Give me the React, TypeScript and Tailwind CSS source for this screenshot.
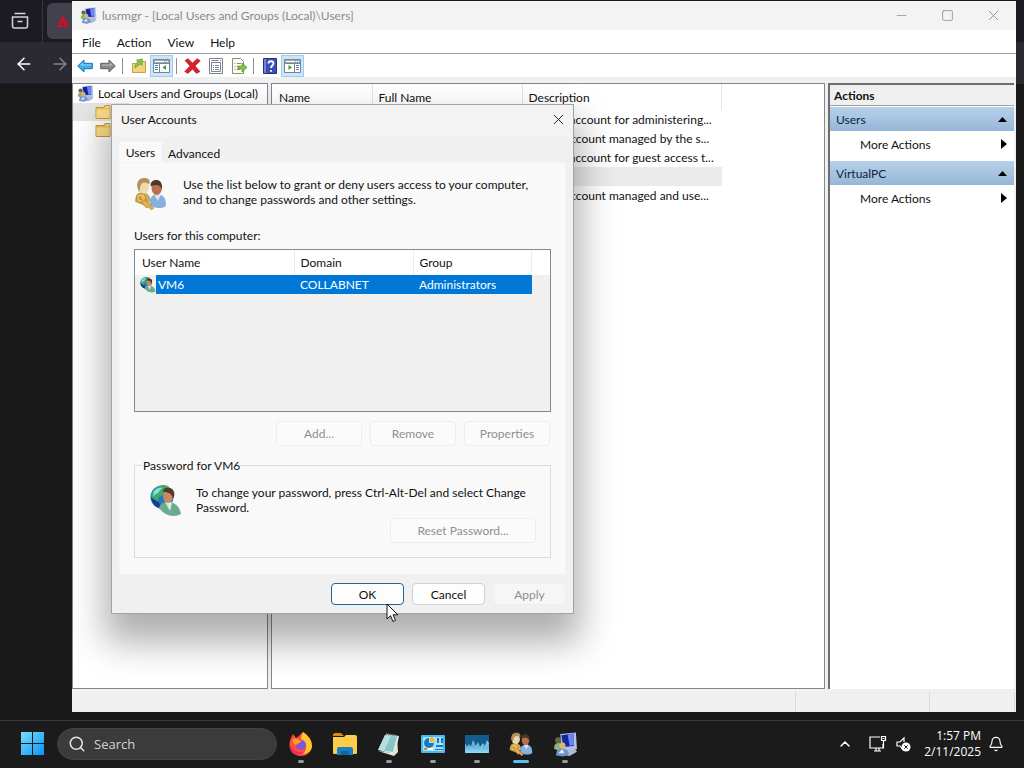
import { useState, type ReactNode } from "react";
import clsx from "clsx";
import { ArrowLeft, ArrowRight, Bell, ChevronUp, Minus, Search, Square, X } from "lucide-react";

const MmcIcon = ({ size }: { size: number }) => (
  <svg width={size} height={size} viewBox="0 0 24 24" className="shrink-0">
    <path d="M7 2l15-1.500 1 16-10 2-5-3z" fill="#b5c1e6" />
    <path d="M8 3l12-1.500v12l-10 1z" fill="#1423a0" />
    <path d="M14 2.500l6-1v11l-4 1z" fill="#6d86ee" />
    <path d="M11 18l10-2 2 3-7 4-6-1z" fill="#a9bdd6" />
    <circle cx="5" cy="8" r="3" fill="#5e6a44" />
    <path d="M1 16c0-4 2-5.500 4-5.500S9.500 12 9.500 16L7 19z" fill="#8fae7a" />
    <circle cx="9" cy="13" r="3" fill="#d8b66a" />
    <path d="M3 22.500c0-5 2-6.500 6-6.500s6 2 6 5.500l-5 2z" fill="#6d94cf" />
    <path d="M5 20.500l4-4 2 4z" fill="#e6eef8" />
  </svg>
);

const UsersKeyIcon = ({ size }: { size: number }) => (
  <svg width={size} height={size} viewBox="0 0 32 32" className="shrink-0">
    <path d="M15 27c0-7 2-10 8-10s8 4 8 11c-4 3-11 3-16-1z" fill="#86b1dd" />
    <path d="M20 18l3 5 3-5-2-2z" fill="#d4e7f8" />
    <ellipse cx="22" cy="11" rx="5" ry="6.500" fill="#b9704c" />
    <path d="M16 9c0-5 3-6 6-6s6 3 5 9c-2-5-5-5-11-3z" fill="#4b382b" />
    <path d="M1 24c0-6 2-9 7-9s8 3 8 8l-5 5z" fill="#c3ad66" />
    <ellipse cx="9" cy="9.500" rx="5.500" ry="7" fill="#ecd9b0" />
    <path d="M3 9c0-6 3-8 7-8s6 2 5 6c-5-3-8-2-9 3l-1 5z" fill="#b39355" />
    <path d="M7 16a4.500 4.500 0 1 1-1 8.900A4.500 4.500 0 0 1 7 16zm-1 3a1.600 1.600 0 1 0 2 2z" fill="#f0c060" stroke="#a8701a" strokeWidth=".7" />
    <path d="M10 22l9 8-2 2-3-3-2 1-5-6z" fill="#e7b14a" stroke="#a8701a" strokeWidth=".6" />
  </svg>
);

const GlobeUserIcon = ({ size }: { size: number }) => (
  <svg width={size} height={size} viewBox="0 0 32 32" className="shrink-0">
    <circle cx="12" cy="12" r="11.500" fill="#2379c4" />
    <path d="M3 6C8-1 17-2 21 4l-5 1-3 5-4 2-2 6-5-3C1 11 1 9 3 6z" fill="#45a86a" />
    <path d="M.8 12c1 7 6 11.500 12 11.500l-4-6z" fill="#173e8e" />
    <path d="M4 6c3-3 6-4 8-3L8 8l-5 3z" fill="#7de4e5" />
    <path d="M9 23c1-4 4-6 9-6 7 0 12 5 13 12-7 4-16 2-22-6z" fill="#6bab8c" />
    <path d="M15 17l5 9 2-8-3-2z" fill="#d2eddc" />
    <ellipse cx="18" cy="11" rx="5" ry="7" fill="#c98a62" />
    <path d="M13 7c0-4 3-5 6-4 5 0 7 6 4 11-1-6-5-7-10-7z" fill="#57372c" />
  </svg>
);

const ArrowIcon = ({ color, stroke, flip }: { color: string; stroke: string; flip?: boolean }) => (
  <svg width="16" height="16" viewBox="0 0 16 16" className={clsx(flip && "-scale-x-100")}>
    <path d="M.7 8L7 2v3.300h8.300v5.400H7V14z" fill={color} stroke={stroke} />
    <path d="M3 7.500L6.200 4.500v2H14v1z" fill="#fff" opacity=".4" />
  </svg>
);

const PaneIcon = ({ right }: { right?: boolean }) => (
  <svg width="17" height="15" viewBox="0 0 17 15">
    <path d="M.5 1.500h16v13H.5z" fill="#fff" stroke="#78848e" />
    <path d="M1 2h15v3H1z" fill="#9fabb6" />
    <path d="M2 3.500h9M12 3.500h1M14 3.500h1" stroke="#fff" />
    <path d="M1 5.500h15" stroke="#78848e" />
    <path d={right ? "M10.500 5v9" : "M6.500 5v9"} stroke="#78848e" />
    <path d={right ? "M12 7.500h3M12 9.500h3M12 11.500h3" : "M2 7.500h3M2 9.500h3M2 11.500h3"} stroke="#5780b4" />
    <path d={right ? "M4.500 7v5L8 9.500z" : "M13 7v5L9.500 9.500z"} fill="#35a32f" />
  </svg>
);

const FolderIcon = () => (
  <svg width="16" height="16" viewBox="0 0 16 16">
    <path d="M1 3.500h8l1-2h5v13H1z" fill="#efc458" stroke="#c99b35" />
    <path d="M1.500 5.500h13v8.500h-13z" fill="#fbdf88" />
    <path d="M10.500 3h4" stroke="#fff3c3" />
  </svg>
);

const tools: { label: string; icon: ReactNode; active?: boolean; sep?: boolean }[] = [
  { label: "Back", icon: <ArrowIcon color="#3eb0e8" stroke="#1972ae" /> },
  { label: "Forward", icon: <ArrowIcon color="#8b8b8b" stroke="#5c5c5c" flip />, sep: true },
  {
    label: "Up",
    icon: (
      <svg width="16" height="16" viewBox="0 0 16 16">
        <path d="M1.500 5.500h4l1.500-2h7.500v11h-13z" fill="#f1d47a" stroke="#c7a13b" />
        <path d="M4 10c0-3 1-5 3-6L5.500 2l6-1L11 7.500 9.500 6C7 7 6 9 4 10z" fill="#7fc44e" stroke="#4f9a35" strokeWidth=".6" />
      </svg>
    ),
  },
  { label: "Show/Hide Console Tree", icon: <PaneIcon />, active: true, sep: true },
  {
    label: "Delete",
    icon: (
      <svg width="17" height="16" viewBox="0 0 17 16">
        <path d="M1 2.500L4 .7 8.500 5 13 .7l3.300 2L11 8l5 5.500-3.500 2-4-4.500-4.500 4.500-3.300-2L6 8z" fill="#da2328" stroke="#a8161d" strokeWidth=".6" />
      </svg>
    ),
  },
  {
    label: "Properties",
    icon: (
      <svg width="16" height="16" viewBox="0 0 16 16" fill="none" stroke="#7c858e">
        <path d="M1.500.5h13v15h-13z" fill="#fff" />
        <path d="M3.500 2.500h7M12 2.500h1M3.500 4.500h9v9h-9zM5 7.500h1M7 7.500h4M5 9.500h1M7 9.500h4M5 11.500h1M7 11.500h4" />
      </svg>
    ),
  },
  {
    label: "Export List",
    icon: (
      <svg width="16" height="16" viewBox="0 0 16 16">
        <path d="M1.500.5h8l3 3v12h-11z" fill="#fffceb" stroke="#8d8b79" />
        <path d="M3.500 5.500h1M6 5.500h4M3.500 8.500h1M6 8.500h3M3.500 11.500h1M6 11.500h3" stroke="#7689a6" />
        <path d="M7 8h4V5l5 4.500-5 4.500v-3H7z" fill="#7fc53b" stroke="#4f922b" strokeWidth=".7" />
      </svg>
    ),
    sep: true,
  },
  {
    label: "Help",
    icon: (
      <svg width="14" height="16" viewBox="0 0 14 16">
        <path d="M.5.5h13v15H.5z" fill="#3b50b5" stroke="#24327f" />
        <path d="M1 1h2v14H1z" fill="#7586d6" />
        <path d="M5.500 5.500c0-3 5-3 5 0 0 2-2.500 2-2.500 4.500M8 12v1.800" fill="none" stroke="#fff" strokeWidth="1.800" />
      </svg>
    ),
  },
  { label: "Show/Hide Action Pane", icon: <PaneIcon right />, active: true },
];

const descriptions = [
  "Built-in account for administering...",
  "A user account managed by the s...",
  "Built-in account for guest access t...",
  "",
  "A user account managed and use...",
];

const BrowserStrip = () => (
  <div className="w-[72px] shrink-0 overflow-hidden bg-[#191919] text-white">
    <div className="flex h-[42px] items-center bg-[#1c1b22]">
      <button aria-label="Recent browsing" className="flex w-10 shrink-0 justify-center">
        <svg width="18" height="18" viewBox="0 0 18 18" fill="none" stroke="#d5d5da" strokeWidth="1.500">
          <path d="M3.500 1.500h11M1.500 5h15v9a2 2 0 0 1-2 2h-11a2 2 0 0 1-2-2zM6.500 9.500h5" />
        </svg>
      </button>
      <div className="ml-[2px] h-full w-px shrink-0 bg-[#38373f]" />
      <div className="ml-1 flex h-9 w-10 shrink-0 items-center rounded-md bg-[#42414d] pl-2">
        <svg width="16" height="16" viewBox="0 0 16 16">
          <path d="M8 2l7 12H1z" fill="#b8172c" />
          <path d="M8 9l2 3H6z" fill="#6b2838" />
        </svg>
      </div>
    </div>
    <div className="flex h-[42px] items-center gap-4 border-b border-[#202026] bg-[#2b2a33] pt-[2px] pl-[14px]">
      <button aria-label="Go back" className="shrink-0">
        <ArrowLeft size={20} strokeWidth={1.8} />
      </button>
      <button aria-label="Go forward" className="shrink-0 text-[#85848b]">
        <ArrowRight size={20} strokeWidth={1.8} />
      </button>
    </div>
  </div>
);

const ActionGroup = ({ title }: { title: string }) => (
  <div className="mb-1">
    <button className="flex h-6 w-full items-center justify-between bg-linear-to-b from-[#b7d0e9] to-[#96b7d8] pr-[7px] pl-[6px] text-[#0c2340]">
      {title}
      <svg width="9" height="5" viewBox="0 0 9 5">
        <path d="M4.500 0L9 5H0z" fill="#000" />
      </svg>
    </button>
    <button className="flex h-[26px] w-full items-center justify-between pr-[7px] pl-[30px]">
      More Actions
      <svg width="6" height="10" viewBox="0 0 6 10">
        <path d="M0 0l6 5-6 5z" fill="#000" />
      </svg>
    </button>
  </div>
);

const ConsoleWindow = () => (
  <main className="mt-px mb-2 flex min-w-0 flex-1 flex-col bg-[#f0f0f0]">
    <header className="flex h-[29px] items-center bg-[#f3f3f3] pl-2 text-[#8b8b8b]">
      <MmcIcon size={17} />
      <h1 className="ml-[5px] flex-1 truncate">lusrmgr - [Local Users and Groups (Local)\Users]</h1>
      <button aria-label="Minimize" className="flex w-[46px] justify-center">
        <Minus size={15} strokeWidth={1.2} />
      </button>
      <button aria-label="Maximize" className="flex w-[46px] justify-center">
        <Square size={13} strokeWidth={1.5} />
      </button>
      <button aria-label="Close" className="flex w-[46px] justify-center">
        <X size={17} strokeWidth={1.2} />
      </button>
    </header>
    <nav className="flex h-6 items-center gap-4 border-b border-[#a0a0a0] bg-white pt-px pl-[10px]">
      <button>File</button>
      <button>Action</button>
      <button>View</button>
      <button>Help</button>
    </nav>
    <div className="flex h-[23px] items-center bg-white pl-px">
      {tools.map((tool) => (
        <div key={tool.label} className="flex items-center">
          <button
            aria-label={tool.label}
            className={clsx(
              "flex h-[22px] w-[23px] items-center justify-center",
              tool.active && "border border-[#99cdf2] bg-[#cce6f9]"
            )}
          >
            {tool.icon}
          </button>
          {tool.sep && <div className="mr-1 ml-[3px] h-4 w-px bg-[#8d8d8d]" />}
        </div>
      ))}
    </div>
    <div className="mt-[6px] flex min-h-0 flex-1 pr-[2px]">
      <section className="w-[196px] shrink-0 border border-[#828790] bg-white">
        <div className="flex h-[19px] items-center gap-1 pl-1">
          <MmcIcon size={17} />
          <span className="whitespace-nowrap">Local Users and Groups (Local)</span>
        </div>
        <div className="flex h-[18px] w-14 items-center bg-[#e5e5e5] pl-[22px]">
          <FolderIcon />
        </div>
        <div className="flex h-[18px] items-center pl-[22px]">
          <FolderIcon />
        </div>
      </section>
      <section className="ml-[3px] min-w-0 flex-1 overflow-hidden border border-[#828790] bg-white">
        <table className="w-[450px] table-fixed text-left">
          <thead>
            <tr className="h-[26px]">
              <th className="w-[100px] border-r border-[#e5e5e5] pl-[7px] font-normal">Name</th>
              <th className="w-[150px] border-r border-[#e5e5e5] pl-[6px] font-normal">Full Name</th>
              <th className="border-r border-[#e5e5e5] pl-[6px] font-normal">Description</th>
            </tr>
          </thead>
          <tbody>
            {descriptions.map((text, i) => (
              <tr key={i} className={clsx("h-[19px]", !text && "bg-[#ebebeb]")}>
                <td />
                <td />
                <td className="pl-[6px] whitespace-nowrap">{text}</td>
              </tr>
            ))}
          </tbody>
        </table>
      </section>
      <aside className="ml-[3px] w-[186px] shrink-0 border-t-2 border-l-2 border-[#6e6e6e] bg-white">
        <h2 className="mb-px flex h-[21px] items-center border-b border-[#a0a0a0] bg-[#f0f0f0] pl-1 font-bold">Actions</h2>
        <ActionGroup title="Users" />
        <ActionGroup title="VirtualPC" />
      </aside>
    </div>
    <footer className="flex h-[23px] justify-end pt-[3px]">
      <div className="w-[134px] border-l border-[#dadada]" />
      <div className="w-[85px] border-l border-[#dadada]" />
      <div className="w-[2px] border-l border-[#dadada]" />
    </footer>
  </main>
);

const disabledButton = "h-[25px] rounded-sm border border-[#ededed] bg-[#fbfbfb] text-[#8f8f8f]";

const UserAccountsDialog = () => {
  const [tab, setTab] = useState("Users");

  return (
    <div
      role="dialog"
      aria-label="User Accounts"
      className="absolute top-[104px] left-[111px] w-[463px] border border-[#a3a3a3] bg-[#f0f0f0] shadow-[0_22px_34px_6px_rgba(0,0,0,0.32)]"
    >
      <header className="flex h-8 items-center justify-between bg-[#f3f3f3] pr-[6px] pb-1 pl-[9px]">
        <h2>User Accounts</h2>
        <button aria-label="Close dialog">
          <X size={17} strokeWidth={1.3} />
        </button>
      </header>
      <div className="px-[7px] pt-[5px]">
        <div role="tablist" className="flex h-5 items-end">
          {["Users", "Advanced"].map((name) => (
            <button
              key={name}
              role="tab"
              aria-selected={tab === name}
              onClick={() => setTab(name)}
              className={clsx("px-[6px]", tab === name ? "h-5 w-[43px] bg-[#f9f9f9]" : "h-[18px]")}
            >
              {name}
            </button>
          ))}
        </div>
        <div className="border border-[#f4f4f4] bg-[#f9f9f9] px-[14px] pb-4">
          <div className="flex gap-4 pt-[14px]">
            <UsersKeyIcon size={33} />
            <p className="w-[356px]">Use the list below to grant or deny users access to your computer, and to change passwords and other settings.</p>
          </div>
          <h3 className="mt-[18px] mb-[6px]">Users for this computer:</h3>
          <div className="h-[163px] border border-[#828790] bg-[#f0f0f0]">
            <div className="bg-white">
              <table className="w-[397px] table-fixed text-left">
                <thead>
                  <tr className="h-[25px]">
                    <th className="w-[159px] border-r border-[#ececec] pl-[7px] font-normal">User Name</th>
                    <th className="w-[119px] border-r border-[#ececec] pl-[6px] font-normal">Domain</th>
                    <th className="border-r border-[#ececec] pl-[6px] font-normal">Group</th>
                  </tr>
                </thead>
              </table>
            </div>
            <table className="w-[397px] table-fixed text-left text-white">
              <tbody>
                <tr className="h-[19px]">
                  <td className="w-[159px]">
                    <div className="flex items-center">
                      <span className="flex w-[21px] justify-end">
                        <GlobeUserIcon size={16} />
                      </span>
                      <span className="h-[19px] flex-1 bg-[#0078d7] pl-[2px] leading-[19px]">VM6</span>
                    </div>
                  </td>
                  <td className="w-[119px] bg-[#0078d7] pl-[6px]">COLLABNET</td>
                  <td className="bg-[#0078d7] pl-[6px]">Administrators</td>
                </tr>
              </tbody>
            </table>
          </div>
          <div className="mt-[9px] flex justify-end gap-2 pr-px">
            <button disabled className={clsx(disabledButton, "w-[86px]")}>Add...</button>
            <button disabled className={clsx(disabledButton, "w-[86px]")}>Remove</button>
            <button disabled className={clsx(disabledButton, "w-[86px]")}>Properties</button>
          </div>
          <fieldset className="mt-3 border border-[#dcdcdc] pr-[14px] pb-[14px] pl-[15px]">
            <legend className="-ml-2 px-px">Password for VM6</legend>
            <div className="flex gap-[14px] pt-3">
              <GlobeUserIcon size={32} />
              <p className="w-[340px]">To change your password, press Ctrl-Alt-Del and select Change Password.</p>
            </div>
            <div className="mt-px flex justify-end">
              <button disabled className={clsx(disabledButton, "w-[146px]")}>Reset Password...</button>
            </div>
          </fieldset>
        </div>
        <div className="flex justify-end gap-2 pt-2 pb-2">
          <button className="h-[22px] w-[73px] rounded-sm border border-[#19689f] bg-[#fdfdfd]">OK</button>
          <button className="h-[22px] w-[73px] rounded-sm border border-[#d0d0d0] bg-[#fdfdfd]">Cancel</button>
          <button disabled className="h-[22px] w-[73px] rounded-sm border border-[#efefef] bg-[#f6f6f6] text-[#8f8f8f]">Apply</button>
        </div>
      </div>
    </div>
  );
};

const apps: { label: string; icon: ReactNode; state?: "open" | "active" }[] = [
  {
    label: "Firefox",
    state: "open",
    icon: (
      <svg width="26" height="26" viewBox="0 0 26 26">
        <path d="M3 7l2-4 3 4 3-2c1-2 3-3 5-4-1 3 2 4 4 7l1-2c6 8 2 19-8 19C3 25-1 16 3 7z" fill="#ff4d36" />
        <path d="M15 1c4 2 9 8 9 14 0 5-5 8-9 8 5-5 4-12-2-15 0-3 1-5 2-7z" fill="#ffc52c" />
        <path d="M2 12c1 6 6 10 13 9-3 4-10 3-13-4z" fill="#ef2571" />
        <circle cx="13" cy="14" r="5" fill="#8055d8" />
        <path d="M5 8c4-1 7 1 9 3-3 0-4 2-6 3-3-1-4-3-3-6z" fill="#ff9b2a" />
      </svg>
    ),
  },
  {
    label: "File Explorer",
    icon: (
      <svg width="26" height="24" viewBox="0 0 26 24">
        <path d="M1 3a2 2 0 0 1 2-2h6l3 3H1z" fill="#d98a12" />
        <path d="M1 5h11l2-2h9a2 2 0 0 1 2 2v16a1 1 0 0 1-1 1H2a1 1 0 0 1-1-1z" fill="#ffcd48" />
        <path d="M5 23v-6a2 2 0 0 1 2-2h12a2 2 0 0 1 2 2v6h-4v-3H9v3z" fill="#197fc6" />
        <path d="M9 19h8v4H9z" fill="#1464a3" />
      </svg>
    ),
  },
  {
    label: "Notepad",
    state: "open",
    icon: (
      <svg width="24" height="25" viewBox="0 0 24 25">
        <path d="M9 2l13 2-4 18-14-3z" fill="#dff0ef" />
        <path d="M8 3l12 2-4 15L1 18z" fill="#87c5c7" />
        <path d="M8 3l6 1-7 15-6-1z" fill="#b4e0df" />
        <path d="M1 19l15 2 4-16 1 15-4 4z" fill="#e9e4d5" />
        <path d="M9 2l12 2" stroke="#747c7d" strokeDasharray="1 1" strokeWidth="2" />
      </svg>
    ),
  },
  {
    label: "Control Panel",
    state: "open",
    icon: (
      <svg width="26" height="22" viewBox="0 0 26 22">
        <rect x="1" y="2" width="24" height="18" rx="1" fill="#49b8ed" />
        <path d="M3 4h20v14H3z" fill="#a8e2fa" />
        <path d="M9 5a5 5 0 1 0 5 5H9z" fill="#1679bf" />
        <path d="M10 4v5h5c0-3-2-5-5-5z" fill="#f9b936" />
        <path d="M17 5h2v5h-2zM21 5h2v5h-2zM16 12h7v2h-7zM15 16h8v1h-8z" fill="#1679bf" />
        <path d="M4 15h3v2H4z" fill="#e57c27" />
        <path d="M8 15h5v2H8z" fill="#fff" />
      </svg>
    ),
  },
  {
    label: "Task Manager",
    state: "open",
    icon: (
      <svg width="26" height="22" viewBox="0 0 26 22">
        <defs>
          <linearGradient id="graph" x1="0" y1="0" x2="0" y2="1">
            <stop stopColor="#1d6ba3" />
            <stop offset="1" stopColor="#a9ebff" />
          </linearGradient>
        </defs>
        <rect x="1" y="2" width="24" height="18" rx="1" fill="#78c6ec" />
        <path d="M1 2h24v8l-2-3-2 6-2-3-3 4-2-5-2 4-3-6-2 7-2-3-2 3-2-4z" fill="#175b8d" />
        <path d="M1 12l2 3 2-3 2 3 3-6 2 6 2-3 3 4 3-4 2 3 3-4v9H1z" fill="url(#graph)" opacity=".6" />
      </svg>
    ),
  },
  { label: "User Accounts", icon: <UsersKeyIcon size={24} />, state: "active" },
  { label: "Local Users and Groups", icon: <MmcIcon size={25} />, state: "open" },
];

const Taskbar = () => (
  <footer className="flex h-12 shrink-0 items-center border-t border-[#383636] bg-[#1b1b1b] pb-px font-['Open_Sans','Noto_Sans',sans-serif] text-white">
    <button aria-label="Start" className="ml-5 shrink-0">
      <svg width="25" height="24" viewBox="0 0 25 24">
        <defs>
          <linearGradient id="start" x1="0" y1="0" x2="1" y2="1">
            <stop stopColor="#79dcfb" />
            <stop offset="1" stopColor="#0795f5" />
          </linearGradient>
        </defs>
        <path d="M1 0h11v11H1zM13 0h11v11H13zM1 12h11v11H1zM13 12h11v11H13z" fill="url(#start)" />
      </svg>
    </button>
    <label className="ml-3 flex h-8 w-[220px] shrink-0 items-center gap-2 rounded-full border border-[#434343] bg-[#3b3b3b] pl-[10px]">
      <Search size={18} strokeWidth={2} className="text-[#e5e5e5]" />
      <input
        aria-label="Search"
        placeholder="Search"
        className="w-40 bg-transparent text-[13px] outline-none placeholder:text-[#d2d2d2]"
      />
    </label>
    <div className="ml-[2px] flex h-full">
      {apps.map((app) => (
        <button key={app.label} aria-label={app.label} className="relative flex w-11 items-center justify-center">
          {app.icon}
          {app.state && (
            <span
              className={clsx(
                "absolute bottom-1 h-[3px] rounded-full",
                app.state === "active" ? "w-4 bg-[#60bdf0]" : "w-[6px] bg-[#9b9b9b]"
              )}
            />
          )}
        </button>
      ))}
    </div>
    <div className="ml-auto flex items-center pr-5">
      <button aria-label="Show hidden icons">
        <ChevronUp size={16} strokeWidth={2.2} />
      </button>
      <button aria-label="Network" className="ml-4">
        <svg width="18" height="18" viewBox="0 0 18 18" fill="none" stroke="#fff" strokeWidth="1.200">
          <path d="M11 2H1v11h13V9M5 16h7M7 13v3M10 13v3M12.500 1.500h4v4h-4zM14.500 5.500v8M13.500 3.500h2" />
        </svg>
      </button>
      <button aria-label="Volume" className="ml-2">
        <svg width="17" height="17" viewBox="0 0 17 17" fill="none">
          <path d="M8 14l-3-4H2V6h3l4-4v4" stroke="#fff" strokeWidth="1.200" />
          <circle cx="11" cy="11" r="4.500" fill="#fff" />
          <path d="M9.300 9.300l3.400 3.400M12.700 9.300l-3.400 3.400" stroke="#222" />
        </svg>
      </button>
      <time className="ml-3 text-right leading-4">
        1:57 PM
        <br />
        2/11/2025
      </time>
      <button aria-label="Notifications" className="ml-[7px]">
        <Bell size={16} strokeWidth={1.7} />
      </button>
    </div>
  </footer>
);

const App = () => (
  <div className="relative flex h-screen flex-col overflow-hidden bg-[#191919] font-['Lato','Open_Sans',sans-serif] text-[12px] leading-[15px] text-[#111]">
    <div className="flex min-h-0 flex-1">
      <BrowserStrip />
      <ConsoleWindow />
      <div className="w-2 shrink-0">
        <div className="h-[42px] bg-[#1c1b22]" />
        <div className="h-[42px] bg-[#2b2a33]" />
      </div>
    </div>
    <Taskbar />
    <UserAccountsDialog />
    <svg className="pointer-events-none absolute top-[603px] left-[386px]" width="13" height="20" viewBox="0 0 13 20">
      <path d="M1 1v15l3.500-3.300L7 18.500l2.500-1.200L7 11.800h4.800z" fill="#fff" stroke="#111" />
    </svg>
  </div>
);

export default App;
